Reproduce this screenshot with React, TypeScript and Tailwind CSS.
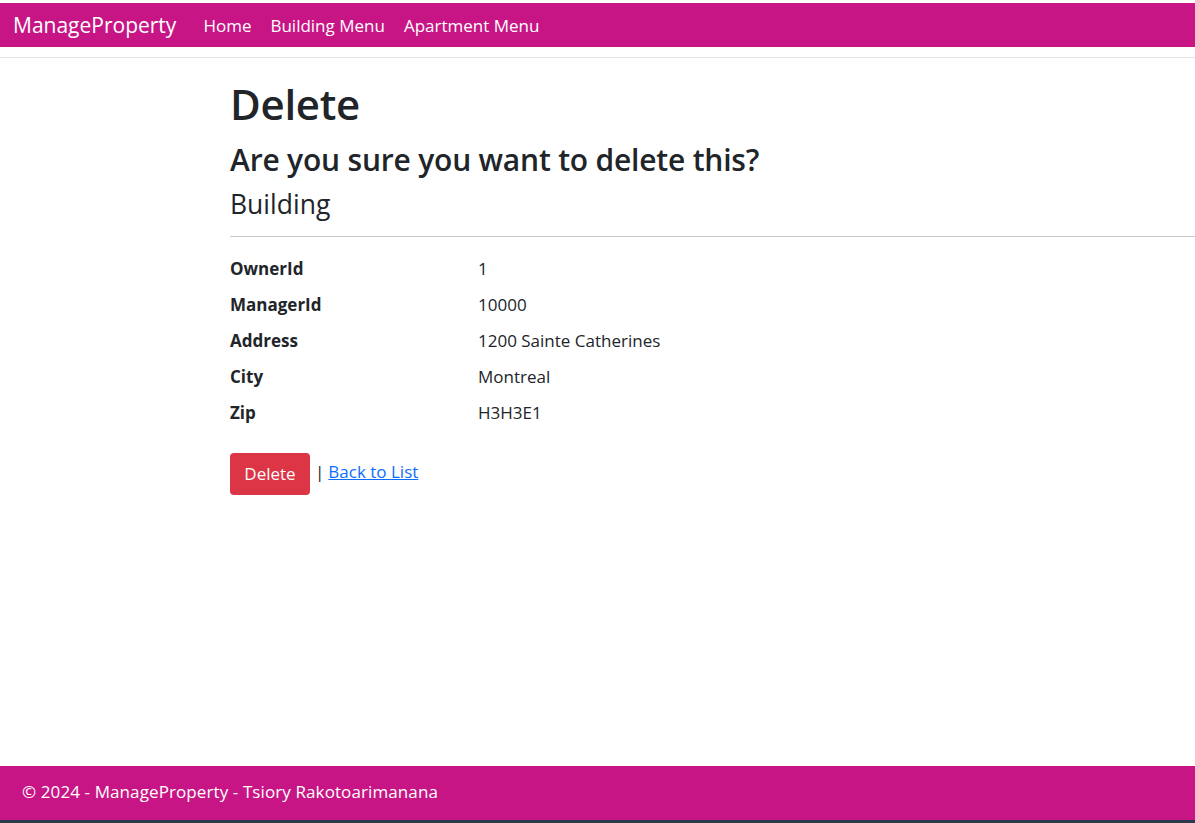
import React from 'react';

const details = [
  { label: 'OwnerId', value: '1' },
  { label: 'ManagerId', value: '10000' },
  { label: 'Address', value: '1200 Sainte Catherines' },
  { label: 'City', value: 'Montreal' },
  { label: 'Zip', value: 'H3H3E1' },
];

export default function App() {
  return (
    <div className="flex h-[823px] w-full flex-col overflow-hidden bg-white font-['Open_Sans',sans-serif] text-[#212529]">
      {/* Navbar */}
      <div className="pt-[3px]">
        <nav className="flex h-[44px] items-center bg-[#c71585] pl-[13px] pt-[2px] text-white">
          <span className="mr-[27px] text-[21px]">ManageProperty</span>
          <ul className="flex gap-[19px] text-[17px]">
            <li>Home</li>
            <li>Building Menu</li>
            <li>Apartment Menu</li>
          </ul>
        </nav>
        <div className="mt-[10px] border-b border-[#e5e5e5]" />
      </div>

      {/* Main Content */}
      <main className="flex-1 pl-[230px]">
        <h1 className="mt-[21px] text-[42px] leading-[50px] font-semibold tracking-[-0.3px]">Delete</h1>
        <h3 className="mt-[13px] text-[30px] leading-[36px] font-semibold tracking-[-0.2px]">Are you sure you want to delete this?</h3>
        <div className="mt-[10px]">
          <h4 className="text-[26.5px] leading-[32px] font-medium">Building</h4>
          <hr className="mt-[16px] border-[#c8c8c8]" />
          <dl className="mt-[19px] grid grid-cols-[248px_1fr] gap-y-[11px] text-[17px] leading-[25px]">
            {details.map((d) => (
              <React.Fragment key={d.label}>
                <dt className="font-bold">{d.label}</dt>
                <dd>{d.value}</dd>
              </React.Fragment>
            ))}
          </dl>
        </div>
        <div className="mt-[28px] flex items-center text-[17px]">
          <button className="h-[42px] w-[80px] rounded-[4px] bg-[#dc3545] text-white">Delete</button>
          <span className="ml-[5px] -mt-[4px]">|</span>
          <a href="#" className="ml-[4px] -mt-[4px] text-[#0d6efd] underline">Back to List</a>
        </div>
      </main>

      {/* Footer */}
      <footer className="flex h-[54px] items-center bg-[#c71585] pb-[2px] pl-[22px] text-[17px] text-white tracking-[0.1px]">
        © 2024 - ManageProperty - Tsiory Rakotoarimanana
      </footer>
      <div className="h-[3px] bg-[#2b3a4a]" />
    </div>
  );
}
